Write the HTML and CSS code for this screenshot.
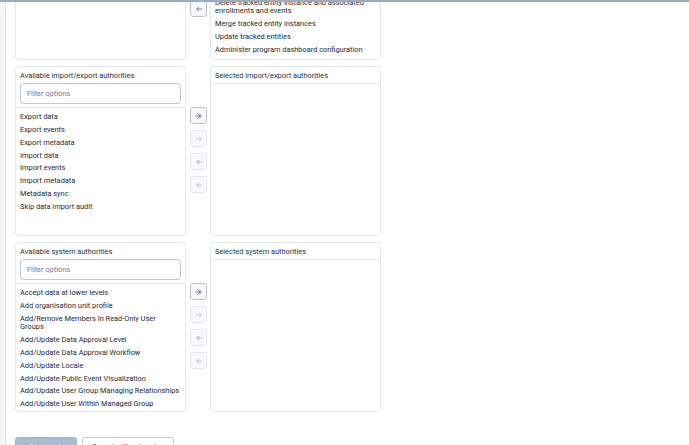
FILE: index.html
```html
<!DOCTYPE html>
<html lang="en">
<head>
<meta charset="utf-8">
<title>Role authorities</title>
<link rel="stylesheet" href="styles.css">
</head>
<body>
<div class="app">
  <div class="topbar"></div>
  <div class="frame">
    <aside class="sidebar"></aside>
    <main class="content">
      <div class="scrolled">

        <section class="transfer">
          <div class="panel">
            <div class="panel-head">
              <div class="panel-title">Available tracker authorities</div>
              <div class="filter">Filter options</div>
            </div>
            <ul class="options"></ul>
          </div>
          <div class="moves">
            <button class="move"><svg viewBox="0 0 24 24"><path d="M2 12H16M9 6l6 6-6 6M14 6l6 6-6 6"/></svg></button>
            <button class="move"><svg viewBox="0 0 24 24"><path d="M4 12H19M13 6l6 6-6 6"/></svg></button>
            <button class="move"><svg viewBox="0 0 24 24"><path d="M22 12H8M15 6l-6 6 6 6M10 6l-6 6 6 6"/></svg></button>
            <button class="move on"><svg viewBox="0 0 24 24"><path d="M20 12H5M11 6l-6 6 6 6"/></svg></button>
          </div>
          <div class="panel">
            <div class="panel-head plain">
              <div class="panel-title">Selected tracker authorities</div>
            </div>
            <ul class="options">
              <li>Search tracked entity in all org units</li>
              <li>Ignore validation of required fields in Tracker and Event Capture</li>
              <li>Enrollment cascade delete</li>
              <li>Tracked entity instance cascade delete</li>
              <li>Uncomplete events</li>
              <li>Edit expired events</li>
              <li>Delete tracked entity instance and associated enrollments and events</li>
              <li>Merge tracked entity instances</li>
              <li>Update tracked entities</li>
              <li>Administer program dashboard configuration</li>
            </ul>
          </div>
        </section>

        <section class="transfer">
          <div class="panel">
            <div class="panel-head">
              <div class="panel-title">Available import/export authorities</div>
              <div class="filter">Filter options</div>
            </div>
            <ul class="options">
              <li>Export data</li>
              <li>Export events</li>
              <li>Export metadata</li>
              <li>Import data</li>
              <li>Import events</li>
              <li>Import metadata</li>
              <li>Metadata sync</li>
              <li>Skip data import audit</li>
            </ul>
          </div>
          <div class="moves">
            <button class="move on"><svg viewBox="0 0 24 24"><path d="M2 12H16M9 6l6 6-6 6M14 6l6 6-6 6"/></svg></button>
            <button class="move"><svg viewBox="0 0 24 24"><path d="M4 12H19M13 6l6 6-6 6"/></svg></button>
            <button class="move"><svg viewBox="0 0 24 24"><path d="M22 12H8M15 6l-6 6 6 6M10 6l-6 6 6 6"/></svg></button>
            <button class="move"><svg viewBox="0 0 24 24"><path d="M20 12H5M11 6l-6 6 6 6"/></svg></button>
          </div>
          <div class="panel">
            <div class="panel-head plain">
              <div class="panel-title">Selected import/export authorities</div>
            </div>
            <ul class="options"></ul>
          </div>
        </section>

        <section class="transfer">
          <div class="panel">
            <div class="panel-head">
              <div class="panel-title">Available system authorities</div>
              <div class="filter">Filter options</div>
            </div>
            <ul class="options">
              <li>Accept data at lower levels</li>
              <li>Add organisation unit profile</li>
              <li>Add/Remove Members In Read-Only User Groups</li>
              <li>Add/Update Data Approval Level</li>
              <li>Add/Update Data Approval Workflow</li>
              <li>Add/Update Locale</li>
              <li>Add/Update Public Event Visualization</li>
              <li>Add/Update User Group Managing Relationships</li>
              <li>Add/Update User Within Managed Group</li>
              <li>Add/Update Validation Rule</li>
            </ul>
          </div>
          <div class="moves">
            <button class="move on"><svg viewBox="0 0 24 24"><path d="M2 12H16M9 6l6 6-6 6M14 6l6 6-6 6"/></svg></button>
            <button class="move"><svg viewBox="0 0 24 24"><path d="M4 12H19M13 6l6 6-6 6"/></svg></button>
            <button class="move"><svg viewBox="0 0 24 24"><path d="M22 12H8M15 6l-6 6 6 6M10 6l-6 6 6 6"/></svg></button>
            <button class="move"><svg viewBox="0 0 24 24"><path d="M20 12H5M11 6l-6 6 6 6"/></svg></button>
          </div>
          <div class="panel">
            <div class="panel-head plain">
              <div class="panel-title">Selected system authorities</div>
            </div>
            <ul class="options"></ul>
          </div>
        </section>

        <div class="actions">
          <button class="btn primary">Create role</button>
          <button class="btn secondary">Cancel without saving</button>
        </div>

      </div>
    </main>
  </div>
</div>
</body>
</html>
```

FILE: styles.css
```css
* { box-sizing: border-box; }
html, body { margin: 0; padding: 0; }
body {
  width: 689px;
  height: 445px;
  overflow: hidden;
  background: #ffffff;
  font-family: Roboto, "Liberation Sans", sans-serif;
  color: #212934;
}
.app { display: flex; flex-direction: column; height: 445px; }
.topbar { height: 2px; background: #9aacbe; flex: none; }
.frame { display: flex; flex: 1; min-height: 0; }
.sidebar {
  width: 6px;
  flex: none;
  background: #f4f6f8;
  border-right: 1px solid #e1e6eb;
}
.content { flex: 1; overflow: hidden; padding-left: 9px; }
.scrolled { margin-top: -112px; display: flex; flex-direction: column; gap: 6px; }

.transfer { display: flex; height: 170px; align-items: center; }
.panel {
  width: 171px;
  height: 170px;
  border: 1px solid #e3e8ed;
  border-radius: 3px;
  background: #fff;
  display: flex;
  flex-direction: column;
  overflow: hidden;
  flex: none;
}
.panel-head {
  padding: 4px 4px 3px;
  border-bottom: 1px solid #e3e8ed;
  flex: none;
}
.panel-title {
  font-size: 7.4px;
  line-height: 9px;
  height: 9px;
  color: #273140;
  white-space: nowrap;
}
.filter {
  margin-top: 3px;
  height: 21px;
  border: 1px solid #c5cbd1;
  border-radius: 3px;
  box-shadow: inset 0 1px 2px rgba(48, 54, 60, 0.08);
  padding-left: 6px;
  font-size: 7.4px;
  line-height: 19px;
  color: #6e7a8a;
}
.options {
  list-style: none;
  margin: 0;
  padding: 3px 0 0;
  flex: 1;
  overflow: hidden;
}
.options li {
  font-size: 7.4px;
  line-height: 8.6px;
  padding: 2.12px 4px;
  color: #1f2733;
}

.moves {
  width: 17px;
  margin: 0 3px 2px 4px;
  display: flex;
  flex-direction: column;
  gap: 6px;
  flex: none;
}
.move {
  width: 17px;
  height: 17px;
  padding: 0;
  border: 1px solid #e4e8ec;
  border-radius: 3px;
  background: #f8f9fa;
  display: flex;
  align-items: center;
  justify-content: center;
}
.move svg {
  width: 8px;
  height: 8px;
  fill: none;
  stroke: #a7b1bd;
  stroke-width: 2;
  stroke-linecap: round;
  stroke-linejoin: round;
}
.move.on { border-color: #b9c2cc; background: #f7f8f9; }
.move.on svg { stroke: #4a5768; }

.actions { display: flex; gap: 5px; margin-top: 19px; }
.btn {
  height: 20px;
  padding: 0 7px;
  border-radius: 3px;
  font-family: Roboto, "Liberation Sans", sans-serif;
  font-size: 7.4px;
  line-height: 18px;
}
.btn.primary {
  width: 62px;
  background: #a8bcd3;
  border: 1px solid #9db2ca;
  color: #eef3f8;
}
.btn.secondary {
  width: 92px;
  background: #ffffff;
  border: 1px solid #c5cbd1;
  color: #404b5a;
}
```
